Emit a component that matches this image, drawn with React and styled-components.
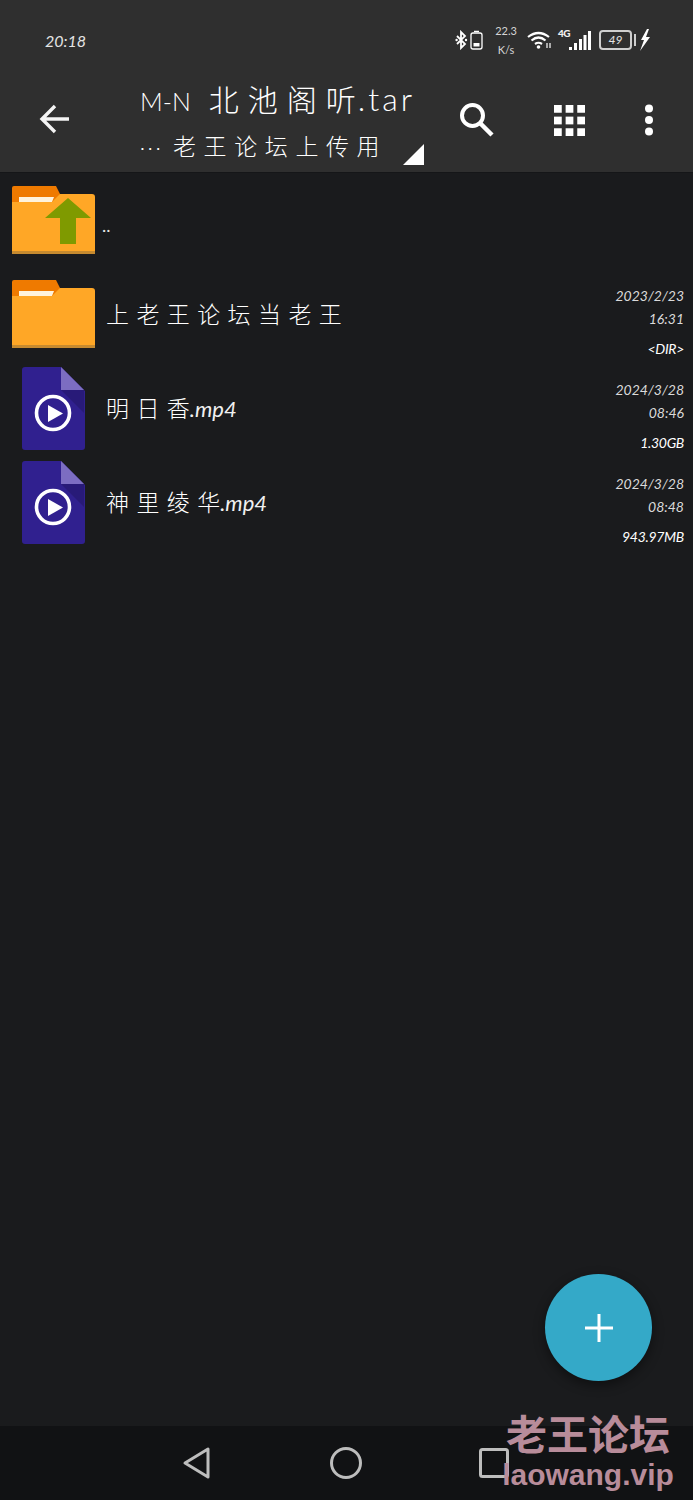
import React from "react";
import styled, { createGlobalStyle } from "styled-components";

const CJK = `"Noto Sans CJK SC", "Noto Sans", sans-serif`;
const LATIN = `Lato, "Noto Sans CJK SC", sans-serif`;

const files = [
  { id: 1, kind: "dir", name: "上老王论坛当老王", date: "2023/2/23", time: "16:31", size: "<DIR>" },
  { id: 2, kind: "video", name: "明日香", ext: ".mp4", date: "2024/3/28", time: "08:46", size: "1.30GB" },
  { id: 3, kind: "video", name: "神里绫华", ext: ".mp4", date: "2024/3/28", time: "08:48", size: "943.97MB" },
];

const FolderIcon = ({ up }) => (
  <FolderSvg viewBox="0 0 83 68">
    <path d="M2 0H44L48 8V20H0V2Q0 0 2 0Z" fill="#ef7a00" />
    <path d="M7 11H42L40 16H7Z" fill="#fff3dc" />
    <path d="M0 16H40L48 8H80Q83 8 83 11V68H0Z" fill="#ffa726" />
    <path d="M0 65H83V68H0Z" fill="#c68a2f" />
    {up && <path d="M56 12L79 32H64V58H48V32H33Z" fill="#7f9a00" />}
  </FolderSvg>
);

const VideoIcon = () => (
  <FileSvg viewBox="0 0 63 83">
    <path d="M3 0H39L63 24V80Q63 83 60 83H3Q0 83 0 80V3Q0 0 3 0Z" fill="#30208f" />
    <path d="M39 23H62V46Z" fill="#281a78" />
    <path d="M39 0L62 23H39Z" fill="#7c6dc2" />
    <circle cx="31" cy="46" r="16.5" fill="none" stroke="#fff" strokeWidth="3.6" />
    <path d="M26 38L41 46.5L26 55Z" fill="#fff" />
  </FileSvg>
);

const StatusIcons = () => (
  <StatusGroup>
    <Glyph width="28" height="20" viewBox="0 0 28 20" fill="none" stroke="#fff">
      <path d="M2 6L10 14L6 18V2L10 6L2 14" strokeWidth="1.8" />
      <circle cx="1.6" cy="10" r="1.2" fill="#fff" stroke="none" />
      <circle cx="11" cy="10" r="1.2" fill="#fff" stroke="none" />
      <rect x="16" y="3" width="11" height="16" rx="2" strokeWidth="1.3" />
      <path d="M19 1.4H24" strokeWidth="1.3" />
      <rect x="18.5" y="13" width="6" height="3.5" fill="#fff" stroke="none" />
    </Glyph>
    <Speed>
      <span>22.3</span>
      <span>K/s</span>
    </Speed>
    <Glyph width="25" height="18" viewBox="0 0 25 18" fill="none" stroke="#fff" strokeWidth="2.2">
      <path d="M1 6Q11.5 -2 22 6" />
      <path d="M4.5 9.5Q11.5 3.500 18.5 9.5" />
      <path d="M8 13Q11.5 10.5 15 13" />
      <circle cx="11.5" cy="16" r="1.8" fill="#fff" stroke="none" />
      <path d="M20 12V17M23 12V17" strokeWidth="1.2" />
    </Glyph>
    <NetLabel>4G</NetLabel>
    <Glyph width="22" height="21" viewBox="0 0 22 21" fill="#fff">
      <rect x="0" y="17" width="3" height="3" />
      <rect x="5" y="13" width="3" height="7" />
      <rect x="10" y="9" width="3" height="11" />
      <rect x="14.5" y="5" width="3" height="15" />
      <rect x="19" y="1" width="3" height="19" />
    </Glyph>
    <Battery>49</Battery>
    <BatteryTip />
    <Glyph width="10" height="22" viewBox="0 0 10 22" fill="#fff">
      <path d="M7 0L1 11H4L0 22L10 8H6L9 0Z" />
    </Glyph>
  </StatusGroup>
);

const App = () => {
  return (
    <Screen>
      <GlobalStyle />
      <Header>
        <StatusBar>
          <Clock>20:18</Clock>
          <StatusIcons />
        </StatusBar>
        <Toolbar>
          <BackButton width="30" height="30" viewBox="0 0 30 30" fill="none" stroke="#f4f4f4" strokeWidth="3.4">
            <path d="M30 15H3M16 2L3 15L16 28" />
          </BackButton>
          <TitleBlock>
            <Title>
              <TitleLead>M-N</TitleLead>
              <TitleSpaced>北池阁</TitleSpaced>听<TitleExt>.tar</TitleExt>
            </Title>
            <SubtitleRow>
              <Subtitle>
                <Dots>···</Dots>老王论坛上传用
              </Subtitle>
              <Corner />
            </SubtitleRow>
          </TitleBlock>
          <Actions>
            <ActionIcon width="36" height="36" viewBox="0 0 36 36" fill="none" stroke="#fff">
              <circle cx="13.5" cy="13.5" r="10.5" strokeWidth="4" />
              <path d="M21 21L33 33" strokeWidth="4.5" />
            </ActionIcon>
            <ActionIcon width="31" height="31" viewBox="0 0 32 32" fill="#fff">
              {[0, 12, 24].map((y) =>
                [0, 12, 24].map((x) => <rect key={`${x}-${y}`} x={x} y={y} width="8" height="8" />)
              )}
            </ActionIcon>
            <MoreIcon width="10" height="32" viewBox="0 0 10 32" fill="#fff">
              <circle cx="5" cy="4.5" r="4" />
              <circle cx="5" cy="16" r="4" />
              <circle cx="5" cy="27.5" r="4" />
            </MoreIcon>
          </Actions>
        </Toolbar>
      </Header>

      <List>
        <Row>
          <IconCell $inset={12} $top={13}>
            <FolderIcon up />
          </IconCell>
          <UpLabel>..</UpLabel>
        </Row>
        {files.map((file) => (
          <Row key={file.id}>
            {file.kind === "dir" ? (
              <IconCell $inset={12} $top={13}>
                <FolderIcon />
              </IconCell>
            ) : (
              <IconCell $inset={22} $top={6}>
                <VideoIcon />
              </IconCell>
            )}
            <Name>
              <NameSpaced>{file.name.slice(0, -1)}</NameSpaced>
              {file.name.slice(-1)}
              {file.ext && <Ext>{file.ext}</Ext>}
            </Name>
            <Meta>
              <MetaLine>{file.date}</MetaLine>
              <MetaLine>{file.time}</MetaLine>
              <SizeLine>{file.size}</SizeLine>
            </Meta>
          </Row>
        ))}
      </List>

      <NavBar>
        <NavIcon width="32" height="36" viewBox="0 0 32 36" fill="none">
          <path d="M27 4V32L4 18Z" strokeLinejoin="round" />
        </NavIcon>
        <NavIcon width="34" height="34" viewBox="0 0 34 34" fill="none">
          <circle cx="17" cy="17" r="14.5" />
        </NavIcon>
        <NavIcon width="30" height="30" viewBox="0 0 30 30" fill="none">
          <rect x="1.5" y="1.5" width="27" height="27" rx="2" />
        </NavIcon>
      </NavBar>

      <Fab>
        <svg width="28" height="28" viewBox="0 0 28 28" fill="#fff">
          <rect x="12.5" y="0" width="3" height="28" />
          <rect x="0" y="12.5" width="28" height="3" />
        </svg>
      </Fab>

      <Watermark>
        <WatermarkCn>老王论坛</WatermarkCn>
        <WatermarkEn>laowang.vip</WatermarkEn>
      </Watermark>
    </Screen>
  );
};

const GlobalStyle = createGlobalStyle`
  html, body {
    margin: 0;
    padding: 0;
    background: #1a1b1d;
    overflow: hidden;
  }
`;

const Screen = styled.div`
  position: relative;
  width: 693px;
  height: 1500px;
  display: flex;
  flex-direction: column;
  background: #1a1b1d;
  color: #fff;
  font-family: ${CJK};
  overflow: hidden;
`;

const Header = styled.header`
  height: 173px;
  flex-shrink: 0;
  background: #2f2f2f;
  display: flex;
  flex-direction: column;
`;

const StatusBar = styled.div`
  height: 80px;
  display: flex;
  align-items: center;
  justify-content: space-between;
  padding: 0 43px 0 45px;
`;

const Clock = styled.span`
  font-family: ${LATIN};
  font-size: 16px;
  font-weight: 400;
  font-style: italic;
  color: #e4e4e4;
`;

const StatusGroup = styled.div`
  display: flex;
  align-items: center;
`;

const Glyph = styled.svg`
  display: block;
  flex-shrink: 0;
`;

const Speed = styled.div`
  width: 22px;
  margin: 0 10px 0 12px;
  display: flex;
  flex-direction: column;
  align-items: center;
  gap: 5px;
  font-family: ${LATIN};
  font-size: 11px;
  line-height: 14px;
  font-weight: 400;
  color: #d4d4d4;
`;

const NetLabel = styled.span`
  align-self: flex-start;
  margin: 3px 0 0 6px;
  width: 11px;
  font-family: ${LATIN};
  font-size: 10px;
  line-height: 12px;
  font-weight: 900;
  letter-spacing: -0.5px;
  color: #f0f0f0;
`;

const Battery = styled.div`
  box-sizing: border-box;
  width: 33px;
  height: 20px;
  margin-left: 8px;
  border: 2px solid #cfcfcf;
  border-radius: 4px;
  text-align: center;
  font-family: ${LATIN};
  font-size: 12px;
  line-height: 16px;
  font-weight: 400;
  font-style: italic;
  color: #e4e4e4;
`;

const BatteryTip = styled.div`
  width: 2px;
  height: 12px;
  margin: 0 4px 0 2px;
  background: #cfcfcf;
`;

const Toolbar = styled.div`
  flex: 1;
  display: flex;
  align-items: flex-start;
  padding: 0 0 0 39px;
`;

const BackButton = styled.svg`
  display: block;
  flex-shrink: 0;
  margin-top: 24px;
`;

const TitleBlock = styled.div`
  width: 285px;
  margin-left: 71px;
  display: flex;
  flex-direction: column;
`;

const Title = styled.div`
  height: 46px;
  font-size: 30px;
  line-height: 36px;
  font-weight: 300;
  color: #fff;
  white-space: nowrap;
`;

const TitleLead = styled.span`
  font-family: ${LATIN};
  font-size: 25px;
  font-weight: 300;
  margin-right: 18px;
`;

const TitleSpaced = styled.span`
  letter-spacing: 9px;
`;

const TitleExt = styled.span`
  font-family: ${LATIN};
  font-size: 32px;
  font-weight: 300;
  letter-spacing: 3px;
  margin-left: 2px;
`;

const SubtitleRow = styled.div`
  display: flex;
  align-items: flex-end;
  height: 39px;
`;

const Subtitle = styled.div`
  width: 263px;
  align-self: flex-start;
  font-size: 23px;
  line-height: 38px;
  font-weight: 300;
  letter-spacing: 7.6px;
  color: #fff;
  white-space: nowrap;
`;

const Dots = styled.span`
  display: inline-block;
  width: 33px;
  letter-spacing: 3px;
  font-family: ${LATIN};
  font-size: 20px;
`;

const Corner = styled.div`
  width: 21px;
  height: 21px;
  background: #fff;
  clip-path: polygon(100% 0, 100% 100%, 0 100%);
`;

const Actions = styled.div`
  display: flex;
  align-items: center;
  margin-left: 34px;
  margin-top: 22px;
`;

const ActionIcon = styled.svg`
  display: block;
  flex-shrink: 0;
  margin-right: 59px;
`;

const MoreIcon = styled.svg`
  display: block;
  flex-shrink: 0;
`;

const List = styled.main`
  flex: 1;
  display: flex;
  flex-direction: column;
  border-top: 1px solid #151618;
  margin-top: -1px;
`;

const Row = styled.div`
  height: 94px;
  display: flex;
  align-items: flex-start;
  padding-right: 9px;
`;

const IconCell = styled.div`
  width: ${(p) => 106 - p.$inset}px;
  padding: ${(p) => p.$top}px 0 0 ${(p) => p.$inset}px;
  flex-shrink: 0;
`;

const FolderSvg = styled.svg`
  display: block;
  width: 83px;
  height: 68px;
`;

const FileSvg = styled.svg`
  display: block;
  width: 63px;
  height: 83px;
`;

const UpLabel = styled.span`
  margin: 40px 0 0 -4px;
  font-family: ${LATIN};
  font-size: 18px;
  line-height: 24px;
  color: #e6e6e6;
`;

const Name = styled.div`
  flex: 1;
  margin-top: 28px;
  font-size: 23px;
  line-height: 36px;
  font-weight: 300;
  color: #fff;
  white-space: nowrap;
`;

const NameSpaced = styled.span`
  letter-spacing: 7.4px;
`;

const Ext = styled.span`
  font-family: ${LATIN};
  font-size: 22px;
  font-weight: 400;
  font-style: italic;
  color: #f0f0f0;
`;

const Meta = styled.div`
  display: flex;
  flex-direction: column;
  align-items: flex-end;
  padding-top: 17px;
`;

const MetaLine = styled.span`
  font-family: ${LATIN};
  font-size: 14px;
  line-height: 23px;
  font-weight: 400;
  font-style: italic;
  color: #dadada;
`;

const SizeLine = styled.span`
  margin-top: 7px;
  font-family: ${LATIN};
  font-size: 14px;
  line-height: 23px;
  font-style: italic;
  letter-spacing: -0.3px;
  color: #fff;
`;

const NavBar = styled.nav`
  height: 74px;
  flex-shrink: 0;
  background: #111214;
  display: flex;
  align-items: center;
  padding: 0 0 0 181px;
  gap: 116px;
`;

const NavIcon = styled.svg`
  display: block;
  flex-shrink: 0;
  stroke: #bdbdbd;
  stroke-width: 3;
`;

const Fab = styled.button`
  position: absolute;
  right: 41px;
  bottom: 119px;
  width: 107px;
  height: 107px;
  padding: 0;
  border: 0;
  border-radius: 50%;
  background: #34a9c8;
  display: flex;
  align-items: center;
  justify-content: center;
  box-shadow: 0 4px 12px rgba(0, 0, 0, 0.45);
`;

const Watermark = styled.div`
  position: absolute;
  left: 502px;
  top: 1407px;
  width: 172px;
  display: flex;
  flex-direction: column;
  align-items: center;
  color: #b88c9a;
  font-weight: 700;
  white-space: nowrap;
`;

const WatermarkCn = styled.span`
  font-size: 41px;
  line-height: 50px;
`;

const WatermarkEn = styled.span`
  font-family: "Liberation Sans", sans-serif;
  font-size: 30px;
  line-height: 35px;
`;

export default App;
